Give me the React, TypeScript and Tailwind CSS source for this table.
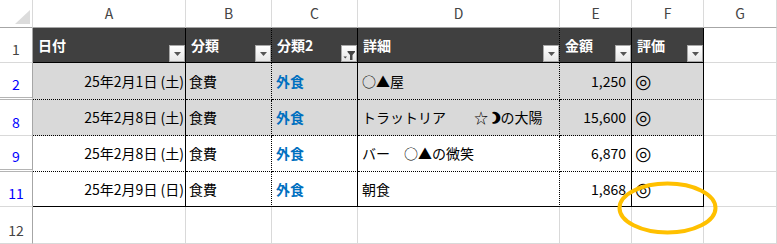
const font = "font-['Noto_Sans_CJK_JP','DejaVu_Sans',sans-serif]"

const letters = ['A', 'B', 'C', 'D', 'E', 'F', 'G']

// right-hand border of each table column (A..F)
const colRight = [
  'border-r border-r-black',
  'border-r border-r-black [border-right-style:dotted]',
  'border-r border-r-black',
  'border-r border-r-black [border-right-style:dotted]',
  'border-r border-r-black',
  'border-r border-r-black',
]

const headers = ['日付', '分類', '分類2', '詳細', '金額', '評価']

const Moon = () => <span className="[-webkit-text-stroke:1.6px_black] font-bold">☽</span>

const rows = [
  { n: '2', shade: true, hidden: true, last: false, date: '25年2月1日 (土)', cat: '食費', cat2: '外食', detail: <>○▲屋</>, amount: '1,250', rate: '◎' },
  { n: '8', shade: true, hidden: false, last: false, date: '25年2月8日 (土)', cat: '食費', cat2: '外食', detail: <>トラットリア　　☆<Moon />の大陽</>, amount: '15,600', rate: '◎' },
  { n: '9', shade: false, hidden: true, last: false, date: '25年2月8日 (土)', cat: '食費', cat2: '外食', detail: <>バー　○▲の微笑</>, amount: '6,870', rate: '◎' },
  { n: '11', shade: false, hidden: false, last: true, date: '25年2月9日 (日)', cat: '食費', cat2: '外食', detail: <>朝食</>, amount: '1,868', rate: '◎' },
]

const DropButton = () => (
  <div className="absolute right-0 bottom-0 w-4 h-[17px] border border-[#a8a8a8] bg-linear-to-b from-white to-[#e6e6e6] flex items-center justify-center">
    <svg width="7" height="4" viewBox="0 0 7 4">
      <path d="M0 0 H7 L3.5 4 Z" fill="#555" />
    </svg>
  </div>
)

const FilterButton = () => (
  <div className="absolute right-0 bottom-0 w-4 h-[17px] border border-[#a8a8a8] bg-linear-to-b from-white to-[#e6e6e6]">
    <svg width="14" height="15" viewBox="0 0 14 15" className="block">
      <path d="M1.5 10.5 H5 L3.25 12.5 Z" fill="#444" />
      <path d="M5.5 5 H13 V6 L10.5 9 V14 H8 V9 L5.5 6 Z" fill="#444" />
    </svg>
  </div>
)

const RowNum = ({ n, blue, double }: { n: string; blue?: boolean; double?: boolean }) => (
  <div
    className={`flex items-end justify-center pb-[3px] leading-5 text-[14px] bg-white border-r border-r-[#a6a6a6] ${
      double ? 'border-b-[3px] border-b-[#b4b4b4] [border-bottom-style:double]' : 'border-b border-b-[#d9d9d9]'
    } ${blue ? 'text-[#0000ff]' : 'text-[#444]'}`}
  >
    {n}
  </div>
)

const App = () => {
  return (
    <div className={`relative w-[777px] h-[244px] overflow-hidden bg-white ${font}`}>
      <div className="grid grid-cols-[33px_153px_86px_86px_202px_72px_72px_73px] grid-rows-[28px_35px_37px_36px_36px_35px_37px]">

        {/* column letters */}
        <div className="relative bg-white border-r border-b border-r-[#d9d9d9] border-b-[#a6a6a6]">
          <svg width="33" height="28" viewBox="0 0 33 28" className="absolute inset-0">
            <path d="M15 24 H30 V10 Z" fill="#dcdcdc" />
          </svg>
        </div>
        {letters.map((l) => (
          <div
            key={l}
            className="flex items-center justify-center text-[14px] text-[#444] bg-white border-r border-b border-r-[#dadada] border-b-[#a6a6a6]"
          >
            {l}
          </div>
        ))}

        {/* header row */}
        <RowNum n="1" />
        {headers.map((h, i) => (
          <div
            key={h}
            className={`relative flex items-center pl-[5px] text-[14px] font-bold text-white bg-[#404040] border-b border-b-black ${colRight[i]}`}
          >
            {h}
            {i === 2 ? <FilterButton /> : <DropButton />}
          </div>
        ))}
        <div className="border-r border-b border-[#d9d9d9]" />

        {/* data rows */}
        {rows.map((r) => {
          const bg = r.shade ? 'bg-[#d9d9d9]' : 'bg-white'
          const bottom = r.last ? 'border-b border-b-black' : 'border-b border-b-black [border-bottom-style:dotted]'
          const cell = `flex items-center text-[14px] whitespace-nowrap ${bg} ${bottom}`
          return [
            <RowNum key={r.n + 'n'} n={r.n} blue double={r.hidden} />,
            <div key={r.n + 'a'} className={`${cell} ${colRight[0]} text-black justify-end pr-px`}>{r.date}</div>,
            <div key={r.n + 'b'} className={`${cell} ${colRight[1]} text-black pl-[3px]`}>{r.cat}</div>,
            <div key={r.n + 'c'} className={`${cell} ${colRight[2]} pl-[4px] font-bold text-[#0070c0]`}>{r.cat2}</div>,
            <div key={r.n + 'd'} className={`${cell} ${colRight[3]} text-black pl-[4px]`}>{r.detail}</div>,
            <div key={r.n + 'e'} className={`${cell} ${colRight[4]} text-black justify-end pr-[5px]`}>{r.amount}</div>,
            <div key={r.n + 'f'} className={`${cell} ${colRight[5]} text-black pl-[3px]`}>
              <span className="font-['DejaVu_Sans',sans-serif] text-[19px] leading-none">{r.rate}</span>
            </div>,
            <div key={r.n + 'g'} className="bg-white border-r border-b border-[#d9d9d9]" />,
          ]
        })}

        {/* empty row 12 */}
        <RowNum n="12" />
        {letters.map((l) => (
          <div key={'12' + l} className="bg-white border-r border-b border-[#d9d9d9]" />
        ))}
      </div>

      {/* hand-drawn highlight over the sheet */}
      <svg width="777" height="244" className="absolute inset-0 pointer-events-none">
        <ellipse cx="667.5" cy="208" rx="48" ry="24.5" fill="none" stroke="#ffc000" strokeWidth="4" />
      </svg>
    </div>
  )
}

export default App
